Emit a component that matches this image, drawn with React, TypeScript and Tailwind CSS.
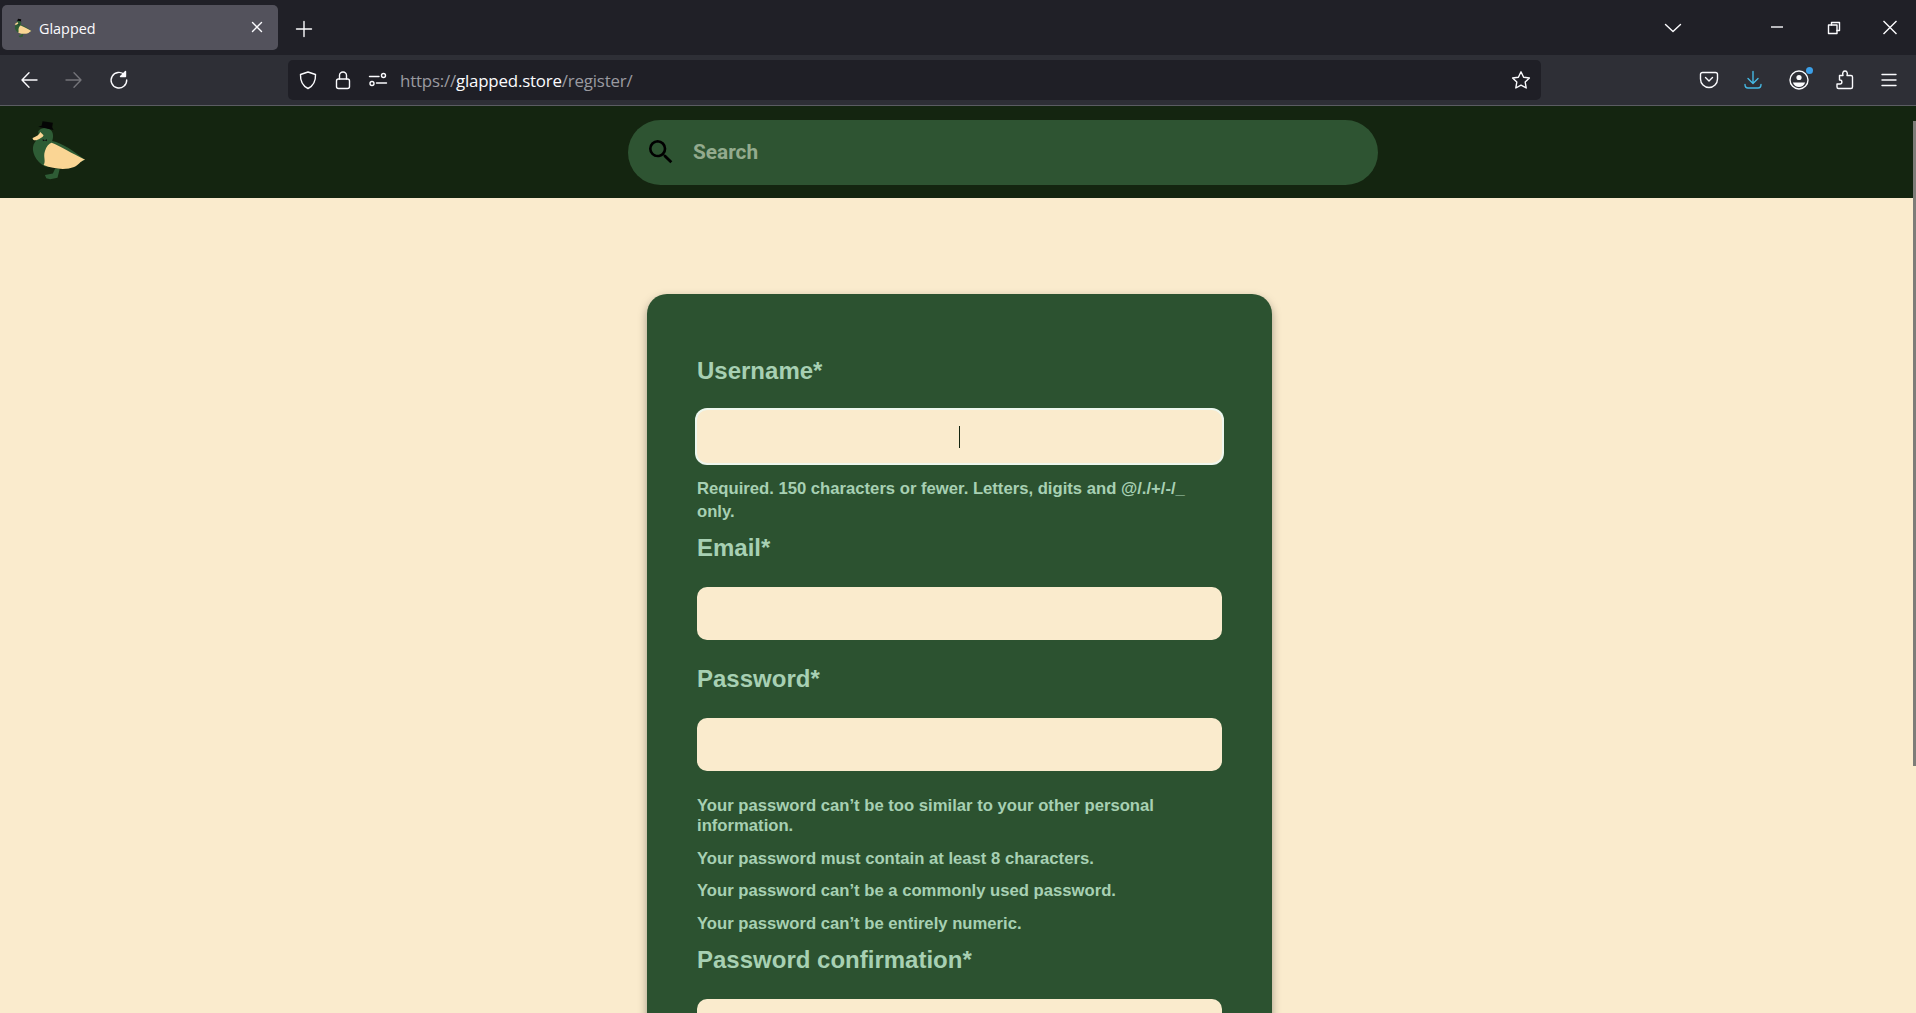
import { MdSearch } from 'react-icons/md';

const duckGreen = '#2e5c35';
const duckCream = '#fad594';

function Duck({ className }: { className: string }) {
  return (
    <svg viewBox="90 55 170 190" className={className}>
      <path d="M165 204 L179 204 L172 232 L150 237 L138 234 L134 224 L158 219 Z" fill={duckGreen} />
      <path
        d="M114 92 C126 76 154 80 158 100 C160 110 157 116 156 121 C188 128 222 152 255 178 L205 204 L135 198 C106 184 92 152 100 132 C108 118 118 106 114 92 Z"
        fill={duckGreen}
      />
      <path
        d="M154 127 C178 135 216 160 255 178 C240 182 236 194 222 200 C196 210 160 206 130 194 C138 180 128 170 134 152 C138 138 146 130 154 127 Z"
        fill={duckCream}
      />
      <path d="M120 94 C118 102 108 108 97 112 C96 118 104 121 110 118 C120 114 128 110 130 104 Z" fill={duckCream} />
      <path d="M127 62 L158 66 L156 80 L160 88 L114 78 L124 75 Z" fill="#050505" />
      <path d="M127 115 L134 119 L140 115 L140 122 L134 120 L128 122 Z" fill="#111" />
    </svg>
  );
}

function ChromeIcon({ children, className = 'text-[#fbfbfe]' }: { children: React.ReactNode; className?: string }) {
  return (
    <svg
      viewBox="0 0 20 20"
      fill="none"
      stroke="currentColor"
      strokeWidth="1.4"
      strokeLinecap="round"
      strokeLinejoin="round"
      className={`w-5 h-5 shrink-0 ${className}`}
    >
      {children}
    </svg>
  );
}

function TabBar() {
  return (
    <div className="h-[55px] bg-[#202027] flex items-start pr-4">
      <div className="mt-[5px] ml-[2px] w-[276px] h-[45px] rounded-[5px] bg-[#53525c] flex items-center pl-3 pr-[11px]">
        <Duck className="w-[18px] h-[20px]" />
        <span className="ml-[7px] mt-[3px] text-[14.4px] text-[#fbfbfe] font-['Open_Sans',sans-serif]">Glapped</span>
        <ChromeIcon className="text-[#fbfbfe] ml-auto -mt-0.5">
          <path d="M5.5 5.5 L14.5 14.5 M14.5 5.5 L5.5 14.5" />
        </ChromeIcon>
      </div>
      <div className="ml-4 mt-[19px]">
        <ChromeIcon>
          <path d="M10 2.5 V17.5 M2.5 10 H17.5" />
        </ChromeIcon>
      </div>
      <div className="ml-auto mt-[18px] flex items-center">
        <ChromeIcon>
          <path d="M2.5 6.5 L10 13.5 L17.5 6.5" />
        </ChromeIcon>
        <div className="ml-[84px]">
          <ChromeIcon>
            <path d="M4 9 H16" strokeLinecap="butt" />
          </ChromeIcon>
        </div>
        <div className="ml-[37px]">
          <ChromeIcon>
            <rect x="4.5" y="7" width="8.5" height="8.5" />
            <path d="M7.5 7 V4.5 H15.5 V12.5 H13" />
          </ChromeIcon>
        </div>
        <div className="ml-9">
          <ChromeIcon>
            <path d="M3.5 3 L16.5 16 M16.5 3 L3.5 16" strokeLinecap="butt" />
          </ChromeIcon>
        </div>
      </div>
    </div>
  );
}

function Toolbar() {
  return (
    <div className="h-[51px] bg-[#2e2f36] border-b border-[#5b5c62] flex items-center pl-[19px]">
      <ChromeIcon>
        <path d="M18 10 H3 M10 2.8 L3 10 L10 17.2" />
      </ChromeIcon>
      <div className="ml-[25px]">
        <ChromeIcon className="text-[#74747a]">
          <path d="M2 10 H17 M10 2.8 L17 10 L10 17.2" />
        </ChromeIcon>
      </div>
      <div className="ml-[25px]">
        <ChromeIcon>
          <path d="M15.5 4.8 A7.8 7.8 0 1 0 17.7 10" />
          <path d="M16.5 1.5 V6.5 H11.5 Z" fill="currentColor" />
        </ChromeIcon>
      </div>

      <div className="ml-[159px] w-[1253px] h-10 rounded-[5px] bg-[#1f1f26] flex items-center pl-[10px] pr-[10px] -mt-px">
        <ChromeIcon>
          <path d="M10 2 L17.5 4.5 C17.8 11 15 16 10 18.5 C5 16 2.2 11 2.5 4.5 Z" />
        </ChromeIcon>
        <div className="ml-[15px]">
          <ChromeIcon>
            <rect x="3.5" y="9" width="13" height="9.5" rx="2" />
            <path d="M6.5 9 V5.5 A3.5 3.5 0 0 1 13.5 5.5 V9" />
          </ChromeIcon>
        </div>
        <div className="ml-[15px]">
          <ChromeIcon>
            <path d="M1.5 6.5 H11 M8.5 13 H18.5" />
            <circle cx="15.5" cy="5.5" r="2" />
            <circle cx="4" cy="13.5" r="2" />
          </ChromeIcon>
        </div>
        <span className="ml-3 mt-[2px] text-[16.9px] tracking-[-0.2px] text-[#9a9aa0] font-['Open_Sans',sans-serif]">
          https://<span className="text-[#fbfbfe]">glapped.store</span>/register/
        </span>
        <div className="ml-auto">
          <ChromeIcon>
            <path d="M10 1.8 L12.6 7.2 L18.4 8 L14.2 12.1 L15.2 18 L10 15.2 L4.8 18 L5.8 12.1 L1.6 8 L7.4 7.2 Z" />
          </ChromeIcon>
        </div>
      </div>

      <div className="ml-[158px]">
        <ChromeIcon>
          <path d="M3.5 2.5 H16.5 A2 2 0 0 1 18.5 4.5 V9 A8.5 8.5 0 0 1 1.5 9 V4.5 A2 2 0 0 1 3.5 2.5 Z" />
          <path d="M6.5 7.5 L10 11 L13.5 7.5" />
        </ChromeIcon>
      </div>
      <div className="ml-6">
        <ChromeIcon className="text-[#45b8e3]">
          <path d="M10 1.5 V13 M5 8.5 L10 13.5 L15 8.5" />
          <path d="M2 14.5 C2 17 3 18 5 18 H15 C17 18 18 17 18 14.5" />
        </ChromeIcon>
      </div>
      <div className="ml-[26px] relative">
        <ChromeIcon>
          <circle cx="10" cy="10" r="9" />
          <circle cx="10" cy="7.5" r="2.6" fill="currentColor" stroke="none" />
          <path d="M3.8 12.5 H16.2 C15 15.8 12.8 17 10 17 C7.2 17 5 15.8 3.8 12.5 Z" fill="currentColor" stroke="none" />
        </ChromeIcon>
        <span className="absolute -top-[3px] -right-1 w-[7px] h-[7px] rounded-full bg-[#3b9fe8]" />
      </div>
      <div className="ml-[26px]">
        <ChromeIcon>
          <path d="M4.5 5.5 H8 C7 2.5 8.5 1 10 1 C11.5 1 13 2.5 12 5.5 H16 C17 5.5 17.5 6 17.5 7 V17 C17.5 18 17 18.5 16 18.5 H3.5 C2.5 18.5 2 18 2 17 V14 H5 C7.5 14 7.5 10 5 10 H4.5 Z" />
        </ChromeIcon>
      </div>
      <div className="ml-6">
        <ChromeIcon>
          <path d="M3 4.5 H17 M3 10 H17 M3 15.5 H17" />
        </ChromeIcon>
      </div>
    </div>
  );
}

function SiteHeader() {
  return (
    <header className="h-[92px] bg-[#142510] flex items-center pl-[30px]">
      <Duck className="w-[57px] h-[63px] -mt-[3px]" />
      <div className="ml-[541px] w-[750px] h-[65px] rounded-full bg-[#2e5432] flex items-center pl-[17px]">
        <MdSearch className="w-8 h-8 text-black" />
        <span className="ml-4 mt-[2px] text-[20.8px] font-bold text-[#93ab8e] font-['Roboto',sans-serif]">Search</span>
      </div>
    </header>
  );
}

const labelClass = 'block h-7 leading-7 text-[24px] font-bold text-[#a7d0b3]';
const inputClass = 'h-[53px] rounded-[10px] bg-[#faebcd]';
const helpClass = 'text-[16.67px] font-bold text-[#a7d0b3]';

function RegisterCard() {
  return (
    <div className="ml-[647px] mt-[96px] w-[625px] rounded-t-[20px] bg-[#2c5230] shadow-[0_4px_10px_rgba(0,0,0,0.35)] px-[50px] pt-[63px] pb-10 font-['Liberation_Sans',sans-serif]">
      <label className={labelClass}>Username*</label>
      <div className={`mt-[25px] ${inputClass} flex items-center justify-center ring-2 ring-[#eef7ee]`}>
        <span className="w-px h-[22px] bg-[#142510]" />
      </div>
      <p className={`mt-[14px] leading-[23px] ${helpClass}`}>
        Required. 150 characters or fewer. Letters, digits and @/./+/-/_ only.
      </p>

      <label className={`mt-[11px] ${labelClass}`}>Email*</label>
      <div className={`mt-[25px] ${inputClass}`} />

      <label className={`mt-[25px] ${labelClass}`}>Password*</label>
      <div className={`mt-[25px] ${inputClass}`} />

      <ul className={`mt-[25px] flex flex-col gap-[12.5px] leading-5 ${helpClass}`}>
        <li>Your password can’t be too similar to your other personal information.</li>
        <li>Your password must contain at least 8 characters.</li>
        <li>Your password can’t be a commonly used password.</li>
        <li>Your password can’t be entirely numeric.</li>
      </ul>

      <label className={`mt-3 ${labelClass}`}>Password confirmation*</label>
      <div className={`mt-[25px] ${inputClass}`} />
    </div>
  );
}

export default function App() {
  return (
    <div className="relative h-[1013px] overflow-hidden bg-[#faebcd]">
      <TabBar />
      <Toolbar />
      <SiteHeader />
      <RegisterCard />
      {/* overlay scrollbar */}
      <div className="absolute right-0 top-[121px] h-[645px] w-[3px] bg-[#7d7d78]" />
    </div>
  );
}
